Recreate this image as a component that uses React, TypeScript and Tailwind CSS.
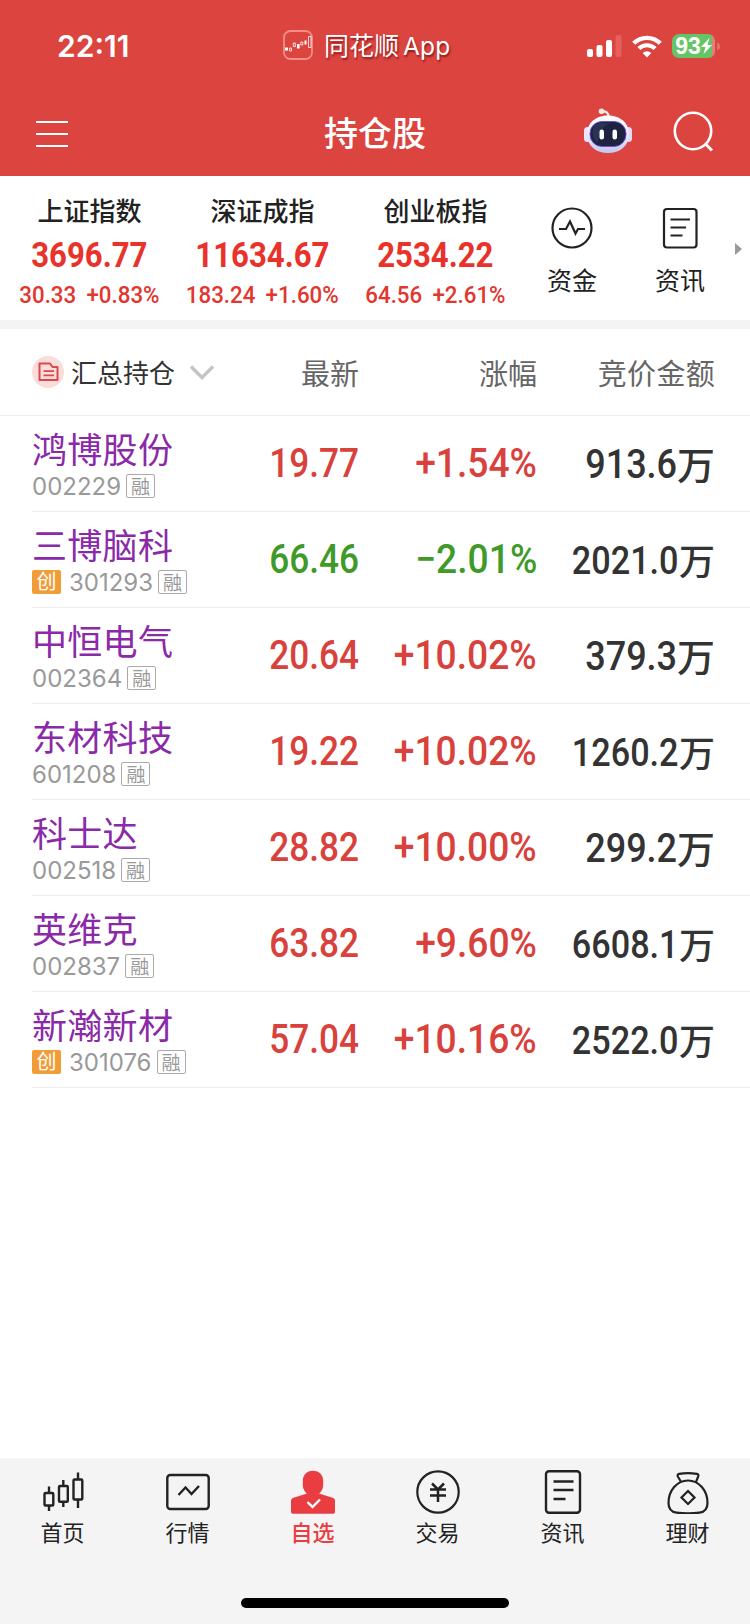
import type { ReactNode } from 'react';

const indices = [
  { name: '上证指数', value: '3696.77', change: '30.33', percent: '+0.83%' },
  { name: '深证成指', value: '11634.67', change: '183.24', percent: '+1.60%' },
  { name: '创业板指', value: '2534.22', change: '64.56', percent: '+2.61%' },
];

const stocks = [
  { name: '鸿博股份', code: '002229', chinext: false, price: '19.77', percent: '+1.54%', amount: '913.6' },
  { name: '三博脑科', code: '301293', chinext: true, price: '66.46', percent: '−2.01%', amount: '2021.0' },
  { name: '中恒电气', code: '002364', chinext: false, price: '20.64', percent: '+10.02%', amount: '379.3' },
  { name: '东材科技', code: '601208', chinext: false, price: '19.22', percent: '+10.02%', amount: '1260.2' },
  { name: '科士达', code: '002518', chinext: false, price: '28.82', percent: '+10.00%', amount: '299.2' },
  { name: '英维克', code: '002837', chinext: false, price: '63.82', percent: '+9.60%', amount: '6608.1' },
  { name: '新瀚新材', code: '301076', chinext: true, price: '57.04', percent: '+10.16%', amount: '2522.0' },
];

const StatusBar = () => (
  <div className="flex h-[92px] items-center pl-[57px] pr-[30px]">
    <div className="w-[226px] font-[Inter,sans-serif] text-[30px] leading-none font-semibold">22:11</div>
    <svg width="30" height="30" viewBox="0 0 30 30" fill="none" className="mb-[2px] shrink-0">
      <rect x="1" y="1" width="28" height="28" rx="6.5" stroke="#f08f89" strokeWidth="1.8" />
      <path d="M2 17.5h3v3H2zM14 14h2.6v4.500H14zM21.500 10.500h2v4h-2z" fill="#fff" />
      <path d="M6.500 18h2v3h-2zM10.300 13h2v3.500h-2zM17.800 12h2v3h-2zM25.500 6.500h2.500v11h-2.500z" stroke="#fff" strokeWidth="0.8" />
    </svg>
    <div className="mb-[2px] ml-[11px] text-[25px] leading-none [text-shadow:1px_2px_2px_rgba(90,0,0,0.6)]">
      同花顺<span className="ml-1 font-[Inter,sans-serif] text-[24.5px] tracking-[0.2px]">App</span>
    </div>
    <div className="ml-auto flex items-center gap-[10px]">
      <svg width="36" height="24" viewBox="0 0 36 24">
        <rect x="1" y="15" width="6" height="8" rx="2" fill="#fff" />
        <rect x="10.500" y="11" width="6" height="12" rx="2" fill="#fff" />
        <rect x="20" y="6" width="6" height="17" rx="2" fill="#fff" />
        <rect x="29.500" y="1" width="6" height="22" rx="2" fill="#e4605c" />
      </svg>
      <svg width="30" height="23" viewBox="0 0 30 23" fill="none" stroke="#fff">
        <path d="M1.700 8.300a19 19 0 0 1 26.600 0" strokeWidth="4.400" />
        <path d="M6.900 13.600a11.500 11.500 0 0 1 16.200 0" strokeWidth="4.200" />
        <path d="M15 22.500l-4.300-4.600a6.200 6.200 0 0 1 8.600 0z" fill="#fff" stroke="none" />
      </svg>
      <div className="flex items-center gap-[2px]">
        <div className="flex h-6 w-[43px] items-center justify-center rounded-[7px] bg-[linear-gradient(90deg,#65c466_93%,#e4807b_93%)]">
          <span className="font-['Liberation_Sans',sans-serif] text-[23px] leading-none font-bold">93</span>
          <svg width="11" height="16" viewBox="0 0 11 16" fill="#fff">
            <path d="M8.500 0L0 9h4.500L2.500 16 11 7H6.500z" />
          </svg>
        </div>
        <div className="h-[7px] w-[3px] rounded-r-full bg-[#e4706c]" />
      </div>
    </div>
  </div>
);

const Robot = () => (
  <svg width="50" height="48" viewBox="0 0 50 48" fill="none">
    <defs>
      <linearGradient id="shell" x1="0" y1="0" x2="0" y2="1">
        <stop offset="0" stopColor="#fff" />
        <stop offset="0.6" stopColor="#e6e4fb" />
        <stop offset="1" stopColor="#c3c6f2" />
      </linearGradient>
    </defs>
    <path d="M19 4.500c4-.8 6.500 1.500 6.500 5" stroke="#fff0ee" strokeWidth="2.200" />
    <circle cx="18.500" cy="4.300" r="2.800" fill="#ffe4e1" />
    <rect x="1" y="20" width="7" height="15" rx="3.500" fill="#e9e6fb" />
    <rect x="42" y="20" width="7" height="15" rx="3.500" fill="#dedaf8" />
    <path d="M25 8.500C36 8.500 46 15 46 27S37 46 25 46 4 39 4 27 14 8.500 25 8.500z" fill="url(#shell)" />
    <rect x="7" y="14.500" width="36" height="25" rx="12" fill="#1d2340" stroke="#6a4fcf" strokeWidth="0.9" />
    <path d="M10 22c1-4 4-6 8-6h10c-7 2-12 8-13 20-4-2-6-7-5-14z" fill="#343e62" opacity="0.6" />
    <rect x="16.500" y="22.500" width="4.500" height="10" rx="2.200" fill="#fff" />
    <rect x="29.500" y="22.500" width="4.500" height="10" rx="2.200" fill="#fff" />
  </svg>
);

const TitleBar = () => (
  <div className="grid h-[84px] grid-cols-[1fr_auto_1fr] items-center pr-[36px] pl-9">
    <div className="flex flex-col gap-[10px]">
      <div className="h-[2px] w-8 bg-white" />
      <div className="h-[2px] w-8 bg-white" />
      <div className="h-[2px] w-8 bg-white" />
    </div>
    <h1 className="pb-[5px] text-[34px] leading-none font-medium">持仓股</h1>
    <div className="flex items-center justify-end gap-[39px] pb-[6px]">
      <Robot />
      <svg width="42" height="42" viewBox="0 0 42 42" fill="none" stroke="#fff" strokeWidth="2.600">
        <circle cx="21" cy="21" r="18.200" />
        <path d="M33 33.500l7 7" strokeWidth="3" />
      </svg>
    </div>
  </div>
);

const IndexStrip = () => (
  <div className="flex h-[153px] border-b-[9px] border-[#f4f4f4] pl-[3px]">
    {indices.map((item) => (
      <div key={item.name} className="flex w-[173px] flex-col items-center pt-[20px] whitespace-nowrap">
        <div className="text-[26px] leading-[28px] font-medium text-[#222]">{item.name}</div>
        <div className="mt-[13px] scale-x-[0.89] font-[Roboto,sans-serif] text-[35px] leading-[37px] font-bold text-[#e8322a]">
          {item.value}
        </div>
        <div className="mt-[8px] flex scale-x-[0.93] gap-[11px] font-[Roboto,sans-serif] text-[24px] leading-[27px] font-medium text-[#e2362e]">
          <span>{item.change}</span>
          <span>{item.percent}</span>
        </div>
      </div>
    ))}
    <div className="flex w-[100px] flex-col items-center pt-[31px] text-[#222]">
      <svg width="42" height="42" viewBox="0 0 42 42" fill="none" stroke="#222" strokeWidth="2.200">
        <circle cx="21" cy="21" r="19.500" />
        <path d="M8 22h7l4-7.500 5.500 12 2.500-4.500h7" />
      </svg>
      <div className="mt-[16px] text-[25px] leading-[28px]">资金</div>
    </div>
    <div className="flex w-[116px] flex-col items-center pt-[31px] text-[#222]">
      <svg width="42" height="42" viewBox="0 0 42 42" fill="none" stroke="#222" strokeWidth="2.200">
        <rect x="5" y="2" width="32.500" height="38.500" rx="3" />
        <path d="M11.500 12.500h19.500M11.500 20.500h15.500M11.500 28.500h12" />
      </svg>
      <div className="mt-[16px] text-[25px] leading-[28px]">资讯</div>
    </div>
    <svg width="7" height="12" viewBox="0 0 7 12" className="mt-[67px] ml-[-3px] shrink-0">
      <path d="M0 0l7 6-7 6z" fill="#999" />
    </svg>
  </div>
);

const TableHead = () => (
  <div className="flex h-[87px] items-center border-b border-[#eee] pl-8 text-[29px] leading-none text-[#666]">
    <div className="flex w-[190px] items-center text-[26px] text-[#333]">
      <svg width="32" height="32" viewBox="0 0 32 32" fill="none">
        <circle cx="16" cy="16" r="16" fill="#fadcdb" />
        <path d="M7.500 7.500h10.500l2.500 3.500h5v13H7.500z" stroke="#d94a4c" strokeWidth="2" strokeLinejoin="round" />
        <path d="M11.500 15.200h10.500M11.500 19.300h10.500" stroke="#d94a4c" strokeWidth="1.800" />
      </svg>
      <span className="ml-[7px]">汇总持仓</span>
      <svg width="24" height="15" viewBox="0 0 24 15" fill="none" className="ml-[15px] shrink-0">
        <path d="M1 1.500l11 11 11-11" stroke="#c4c4c4" strokeWidth="3.400" />
      </svg>
    </div>
    <div className="w-[137px] text-right">最新</div>
    <div className="w-[178px] text-right">涨幅</div>
    <div className="w-[178px] text-right tracking-[0.3px]">竞价金额</div>
  </div>
);

const StockRow = ({ stock }: { stock: (typeof stocks)[number] }) => {
  const down = stock.percent.startsWith('−');
  // long amounts shrink a little to stay inside the column
  const amountSize = stock.amount.length > 5 ? 'text-[38px]' : 'text-[40px]';
  const unitSize = stock.amount.length > 5 ? 'text-[36px]' : 'text-[38px]';
  return (
    <div className={`ml-8 flex h-24 border-b border-[#ececec] whitespace-nowrap ${down ? 'text-[#3f9a29]' : 'text-[#d8413c]'}`}>
      <div className="w-[190px]">
        <div className="mt-[14px] text-[35px] leading-[36px] tracking-[0.3px] text-[#8a2aa8]">{stock.name}</div>
        <div className="mt-[8px] flex h-6 items-center">
          {stock.chinext && (
            <span className="mr-2 flex h-6 w-[29px] items-center justify-center rounded-[2px] bg-[#f09d38] pb-[2px] text-[20px] leading-none text-white">
              创
            </span>
          )}
          <span className="pt-[2px] font-[Inter,sans-serif] text-[24px] leading-none text-[#999]">{stock.code}</span>
          <span className="ml-[5px] flex h-6 w-[29px] items-center justify-center rounded-[2px] border-[1.5px] border-[#aaa] pb-[2px] text-[19px] leading-none text-[#999]">
            融
          </span>
        </div>
      </div>
      <div className="flex h-[95px] w-[137px] items-center justify-end font-[Roboto,sans-serif] text-[40px] font-medium">
        <span className="origin-right scale-x-[0.88]">{stock.price}</span>
      </div>
      <div className="flex h-[95px] w-[178px] items-center justify-end font-[Roboto,sans-serif] text-[40px] font-medium">
        <span className="origin-right scale-x-[0.93]">{stock.percent}</span>
      </div>
      <div className="flex h-[98px] w-[178px] items-center justify-end text-[#333]">
        <span className={`origin-right scale-x-[0.9] font-[Roboto,sans-serif] font-medium ${amountSize}`}>{stock.amount}</span>
        <span className={`pb-[5px] leading-none font-medium ${unitSize}`}>万</span>
      </div>
    </div>
  );
};

const TabItem = ({ label, active, children }: { label: string; active?: boolean; children: ReactNode }) => (
  <div className={`flex flex-1 flex-col items-center ${active ? 'font-medium text-[#ea3d42]' : 'text-[#222]'}`}>
    {children}
    <div className="mt-[4px] text-[22px] leading-[26px]">{label}</div>
  </div>
);

const TabBar = () => (
  <nav className="h-[166px] bg-[#f4f4f4] pt-3">
    <div className="flex">
      <TabItem label="首页">
        <svg width="44" height="44" viewBox="0 0 44 44" fill="none" stroke="#222" strokeWidth="2.400">
          <rect x="3.500" y="23" width="8.800" height="12.500" rx="1" />
          <path d="M8 16.500V23M8 35.500V41M22.300 10v5.500M22.300 31.500v5.500M37 2.500V9M37 29.500V38" />
          <rect x="18" y="16" width="8.800" height="15.800" rx="1" />
          <rect x="32.500" y="9.500" width="8.800" height="20" rx="1" />
        </svg>
      </TabItem>
      <TabItem label="行情">
        <svg width="44" height="44" viewBox="0 0 44 44" fill="none" stroke="#222" strokeWidth="2.400">
          <rect x="1.300" y="5" width="41.400" height="34" rx="3" />
          <path d="M12.500 25l7-7.500 6 6.500 7.500-8" />
        </svg>
      </TabItem>
      <TabItem label="自选" active>
        <svg width="44" height="44" viewBox="0 0 44 44" fill="none">
          <path
            d="M22 .8c6.500 0 10.200 4.500 10.200 10.500V15c0 4-2.200 7.200-4.200 8.500l13.500 4.300c1.700.6 2.500 1.500 2.500 3.200v10.500c0 1.500-.8 2.300-2.300 2.300H2.300C.8 43.800 0 43 0 41.500V31c0-1.700.8-2.600 2.500-3.200L16 23.500c-2-1.300-4.200-4.500-4.200-8.500v-3.700C11.800 5.300 15.500.8 22 .8z"
            fill="#ea3d42"
          />
          <path d="M16.500 32l5 5 7.500-7.500" stroke="#fff" strokeWidth="2.400" />
        </svg>
      </TabItem>
      <TabItem label="交易">
        <svg width="44" height="44" viewBox="0 0 44 44" fill="none" stroke="#222" strokeWidth="2.200">
          <circle cx="22" cy="22" r="20.700" />
          <path d="M16 13.500l6 6 6-6M22 19.500V32M14 19.500h16M14 25.500h16" strokeWidth="2.500" />
        </svg>
      </TabItem>
      <TabItem label="资讯">
        <svg width="44" height="44" viewBox="0 0 44 44" fill="none" stroke="#222" strokeWidth="2.400">
          <rect x="5" y="1.200" width="34" height="41.600" rx="3" />
          <path d="M12.500 11.500h20M12.500 20h20M12.500 29h12" />
        </svg>
      </TabItem>
      <TabItem label="理财">
        <svg width="44" height="44" viewBox="0 0 44 44" fill="none" stroke="#222" strokeWidth="2.200">
          <path d="M15 11.800l-3.200-5.300c-.6-1.200 0-2.300 1.300-2.600 5.500-1 12.300-1 17.800 0 1.300.3 1.900 1.400 1.300 2.600L30 11.800" />
          <path d="M22 10.500c11 0 19.500 10 19.500 22.500 0 6.500-3 9-8 9.700-7 .9-16 .9-23 0-5-.7-8-3.200-8-9.700C2.500 20.500 11 10.500 22 10.500z" />
          <path d="M22 21l6.500 6.500L22 34l-6.500-6.500z" />
        </svg>
      </TabItem>
    </div>
    <div className="mx-auto mt-[54px] h-[10px] w-[268px] rounded-full bg-black" />
  </nav>
);

const App = () => {
  return (
    <div className="flex h-[1624px] w-[750px] flex-col overflow-hidden bg-white font-['Noto_Sans_CJK_SC',sans-serif]">
      <header className="h-44 bg-[#dc4440] text-white">
        <StatusBar />
        <TitleBar />
      </header>
      <IndexStrip />
      <TableHead />
      <main className="flex-1">
        {stocks.map((stock) => (
          <StockRow key={stock.code} stock={stock} />
        ))}
      </main>
      <TabBar />
    </div>
  );
};

export default App;
